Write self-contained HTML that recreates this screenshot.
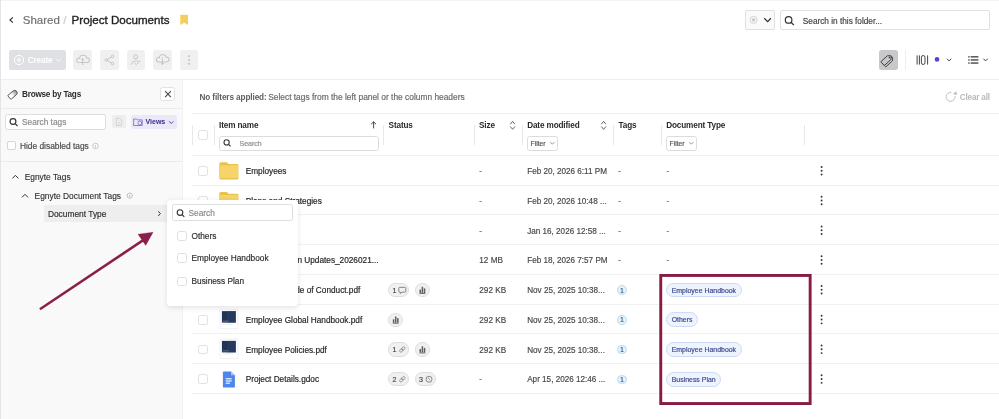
<!DOCTYPE html>
<html><head><meta charset="utf-8">
<style>
*{margin:0;padding:0;box-sizing:border-box}
html,body{width:999px;height:419px;overflow:hidden;background:#fff}
body{font-family:"Liberation Sans",sans-serif;color:#2a2a2a}
#root{position:absolute;left:0;top:0;width:999px;height:419px;will-change:transform}
.a{position:absolute}
.t{position:absolute;white-space:nowrap;line-height:1;-webkit-text-stroke:0.18px currentColor}
svg.s{position:absolute;left:0;top:0;overflow:visible}
</style></head><body><div id="root">
<div class="a" style="left:0.00px;top:0.00px;width:999.00px;height:1.00px;background:#f3f3f4;border-radius:0.00px;"></div>
<div class="a" style="left:0.00px;top:0.00px;width:1.00px;height:419.00px;background:#e4e5e8;border-radius:0.00px;"></div>
<svg class="s" width="999" height="419" viewBox="0 0 999 419"><polyline points="12.9,17.3 10,20 12.9,22.7" fill="none" stroke="#333" stroke-width="1.15"/><path d="M180.3 14.8 h7.7 v10.2 l-3.85 -2.35 l-3.85 2.35 z" fill="#f5cf5e"/></svg>
<div class="t" style="left:22.80px;top:15.00px;font-size:11.50px;color:#6f6f74;">Shared</div>
<div class="t" style="left:63.20px;top:15.00px;font-size:11.50px;color:#c8c8ca;">/</div>
<div class="t" style="left:71.60px;top:14.00px;font-size:11.60px;color:#1e1e1e;-webkit-text-stroke:0.35px #1e1e1e">Project Documents</div>
<div class="a" style="left:745.00px;top:10.00px;width:30.00px;height:20.00px;background:#fafafa;border:1px solid #e1e1e3;border-radius:2.00px;"></div>
<svg class="s" width="999" height="419" viewBox="0 0 999 419"><circle cx="753.6" cy="19.8" r="3.6" fill="none" stroke="#cfcfcf" stroke-width="0.9"/><circle cx="753.6" cy="19.8" r="1.9" fill="#cdcdcd"/><polyline points="764.3,18.3 767.6,21.6 770.9,18.3" fill="none" stroke="#333" stroke-width="1.25"/></svg>
<div class="a" style="left:780.00px;top:10.00px;width:210.00px;height:20.00px;background:#fff;border:1px solid #e1e1e3;border-radius:2.00px;"></div>
<svg class="s" width="999" height="419" viewBox="0 0 999 419"><circle cx="788.6" cy="19.9" r="3.3" fill="none" stroke="#333" stroke-width="1.2"/><line x1="791" y1="22.3" x2="793.9" y2="25.1" stroke="#333" stroke-width="1.3"/></svg>
<div class="t" style="left:802.80px;top:18.00px;font-size:8.25px;color:#454545;">Search in this folder...</div>
<div class="a" style="left:9.30px;top:50.00px;width:56.50px;height:20.00px;background:#dfe0e3;border-radius:2.50px;"></div>
<svg class="s" width="999" height="419" viewBox="0 0 999 419"><circle cx="19" cy="60" r="4.6" fill="none" stroke="#fff" stroke-width="1"/><line x1="19" y1="57.6" x2="19" y2="62.4" stroke="#fff" stroke-width="1.05"/><line x1="16.6" y1="60" x2="21.4" y2="60" stroke="#fff" stroke-width="1.05"/><polyline points="56.2,59.2 58.5,61.4 60.8,59.2" fill="none" stroke="#fff" stroke-width="0.8"/></svg>
<div class="t" style="left:27.70px;top:56.00px;font-size:8.30px;font-weight:bold;-webkit-text-stroke:0;color:#ffffff;letter-spacing:-0.16px">Create</div>
<div class="a" style="left:73.00px;top:50.00px;width:19.00px;height:20.00px;background:#f0f0f0;border-radius:2.50px;"></div>
<div class="a" style="left:100.00px;top:50.00px;width:19.00px;height:20.00px;background:#f0f0f0;border-radius:2.50px;"></div>
<div class="a" style="left:126.60px;top:50.00px;width:18.70px;height:20.00px;background:#f0f0f0;border-radius:2.50px;"></div>
<div class="a" style="left:153.00px;top:50.00px;width:19.00px;height:20.00px;background:#f0f0f0;border-radius:2.50px;"></div>
<div class="a" style="left:179.80px;top:50.00px;width:18.70px;height:20.00px;background:#f0f0f0;border-radius:2.50px;"></div>
<svg class="s" width="999" height="419" viewBox="0 0 999 419"><circle cx="79.00" cy="60.30" r="2.67" fill="#b9b9b9" stroke="#b9b9b9" stroke-width="0.00"/><circle cx="83.10" cy="58.50" r="3.77" fill="#b9b9b9" stroke="#b9b9b9" stroke-width="0.00"/><circle cx="86.90" cy="60.20" r="2.77" fill="#b9b9b9" stroke="#b9b9b9" stroke-width="0.00"/><rect x="79.00" y="59.40" width="7.90" height="3.58" fill="#b9b9b9"/><circle cx="79.00" cy="60.30" r="1.92" fill="#f0f0f0"/><circle cx="83.10" cy="58.50" r="3.02" fill="#f0f0f0"/><circle cx="86.90" cy="60.20" r="2.02" fill="#f0f0f0"/><rect x="79.00" y="59.40" width="7.90" height="2.83" fill="#f0f0f0"/><line x1="82.7" y1="58.4" x2="82.7" y2="65" stroke="#b9b9b9" stroke-width="0.75"/><polyline points="81.2,59.9 82.7,58.4 84.2,59.9" fill="none" stroke="#b9b9b9" stroke-width="0.75"/><circle cx="158.70" cy="59.70" r="2.67" fill="#b9b9b9" stroke="#b9b9b9" stroke-width="0.00"/><circle cx="162.80" cy="57.90" r="3.77" fill="#b9b9b9" stroke="#b9b9b9" stroke-width="0.00"/><circle cx="166.60" cy="59.60" r="2.77" fill="#b9b9b9" stroke="#b9b9b9" stroke-width="0.00"/><rect x="158.70" y="58.80" width="7.90" height="3.58" fill="#b9b9b9"/><circle cx="158.70" cy="59.70" r="1.92" fill="#f0f0f0"/><circle cx="162.80" cy="57.90" r="3.02" fill="#f0f0f0"/><circle cx="166.60" cy="59.60" r="2.02" fill="#f0f0f0"/><rect x="158.70" y="58.80" width="7.90" height="2.83" fill="#f0f0f0"/><line x1="162.4" y1="57.6" x2="162.4" y2="64.6" stroke="#b9b9b9" stroke-width="0.75"/><polyline points="160.9,63.1 162.4,64.6 163.9,63.1" fill="none" stroke="#b9b9b9" stroke-width="0.75"/><circle cx="106.3" cy="59.9" r="1.25" fill="none" stroke="#b9b9b9" stroke-width="0.75"/><circle cx="112.5" cy="56.4" r="1.25" fill="none" stroke="#b9b9b9" stroke-width="0.75"/><circle cx="112.5" cy="63.5" r="1.25" fill="none" stroke="#b9b9b9" stroke-width="0.75"/><line x1="107.4" y1="59.3" x2="111.4" y2="57.0" stroke="#b9b9b9" stroke-width="0.75"/><line x1="107.4" y1="60.5" x2="111.4" y2="62.9" stroke="#b9b9b9" stroke-width="0.75"/><ellipse cx="135.7" cy="56.9" rx="1.9" ry="2.1" fill="none" stroke="#b9b9b9" stroke-width="0.75"/><path d="M131.4 64.6 q0.6 -3.6 4.3 -3.8 q2 0 3 0.9" fill="none" stroke="#b9b9b9" stroke-width="0.75"/><polyline points="134.4,63.0 136.3,64.6 140.6,60.6" fill="none" stroke="#b9b9b9" stroke-width="0.75"/><circle cx="189.1" cy="56.1" r="0.9" fill="#b9b9b9"/><circle cx="189.1" cy="59.9" r="0.9" fill="#b9b9b9"/><circle cx="189.1" cy="63.7" r="0.9" fill="#b9b9b9"/></svg>
<div class="a" style="left:879.00px;top:50.00px;width:19.00px;height:20.00px;background:#c8c8ca;border-radius:2.50px;"></div>
<svg class="s" width="999" height="419" viewBox="0 0 999 419"><g transform="translate(889.0,60.5) rotate(-42)"><path d="M-6.2 -2.6 h8.4 l2.6 2.6 l-2.6 2.6 h-8.4 a0.6 0.6 0 0 1 -0.6 -0.6 v-4 a0.6 0.6 0 0 1 0.6 -0.6 z" fill="#c8c8ca" stroke="#3a3a3a" stroke-width="0.85" stroke-linejoin="round"/></g><g transform="translate(887.6,59.1) rotate(-42)"><path d="M-6.2 -2.6 h8.4 l2.6 2.6 l-2.6 2.6 h-8.4 a0.6 0.6 0 0 1 -0.6 -0.6 v-4 a0.6 0.6 0 0 1 0.6 -0.6 z" fill="#c8c8ca" stroke="#3a3a3a" stroke-width="0.9" stroke-linejoin="round"/><circle cx="2.4" cy="0" r="0.75" fill="#3a3a3a"/></g></svg>
<div class="a" style="left:905.00px;top:50.00px;width:1.00px;height:20.00px;background:#ededed;border-radius:0.00px;"></div>
<svg class="s" width="999" height="419" viewBox="0 0 999 419"><line x1="917.1" y1="55.4" x2="917.1" y2="64.6" stroke="#3a3a3a" stroke-width="0.95"/><line x1="919.4" y1="55.4" x2="919.4" y2="64.6" stroke="#3a3a3a" stroke-width="0.95"/><rect x="921.4" y="55.5" width="3.6" height="9" rx="1.8" fill="none" stroke="#3a3a3a" stroke-width="0.95"/><line x1="927.6" y1="55.4" x2="927.6" y2="64.6" stroke="#3a3a3a" stroke-width="0.95"/><circle cx="937" cy="59.4" r="2.3" fill="#5a3fd0"/><polyline points="946.9,58.7 949.1,60.9 951.3,58.7" fill="none" stroke="#3a3a3a" stroke-width="1"/><rect x="968.2" y="56.2" width="1.4" height="1.3" fill="#3a3a3a"/><rect x="968.2" y="59.3" width="1.4" height="1.3" fill="#3a3a3a"/><rect x="968.2" y="62.4" width="1.4" height="1.3" fill="#3a3a3a"/><rect x="970.6" y="56.2" width="7.8" height="1.3" fill="#3a3a3a"/><rect x="970.6" y="59.3" width="7.8" height="1.3" fill="#3a3a3a"/><rect x="970.6" y="62.4" width="7.8" height="1.3" fill="#3a3a3a"/><polyline points="983.4,58.7 985.6,60.9 987.8,58.7" fill="none" stroke="#3a3a3a" stroke-width="1"/></svg>
<div class="a" style="left:1.00px;top:79.00px;width:998.00px;height:1.00px;background:#efefef;border-radius:0.00px;"></div>
<div class="a" style="left:1.00px;top:80.00px;width:182.00px;height:339.00px;background:#f9f9f9;border-radius:0.00px;box-shadow:inset -1px 0 0 #f2f2f2"></div>
<svg class="s" width="999" height="419" viewBox="0 0 999 419"><defs><linearGradient id="tg" x1="0" x2="1" y1="0" y2="0"><stop offset="0.35" stop-color="#fff"/><stop offset="1" stop-color="#8a8a8a"/></linearGradient></defs><g transform="translate(13.3,94.1) rotate(-40)"><path d="M-4.8 -2.5 h6.6 a2.6 2.6 0 0 1 2.6 2.5 a2.6 2.6 0 0 1 -2.6 2.5 h-6.6 a0.5 0.5 0 0 1 -0.5 -0.5 v-4 a0.5 0.5 0 0 1 0.5 -0.5 z" fill="url(#tg)" stroke="#555" stroke-width="0.9"/></g></svg>
<div class="t" style="left:22.00px;top:91.00px;font-size:8.20px;font-weight:bold;-webkit-text-stroke:0;color:#2b2b2b;letter-spacing:-0.23px">Browse by Tags</div>
<div class="a" style="left:160.40px;top:87.20px;width:14.30px;height:14.30px;background:#fff;border:1px solid #e2e2e2;border-radius:2.50px;"></div>
<svg class="s" width="999" height="419" viewBox="0 0 999 419"><line x1="165.1" y1="91.2" x2="170.9" y2="97.1" stroke="#444" stroke-width="1.05"/><line x1="170.9" y1="91.2" x2="165.1" y2="97.1" stroke="#444" stroke-width="1.05"/></svg>
<div class="a" style="left:1.00px;top:108.00px;width:181.00px;height:1.00px;background:#ebebeb;border-radius:0.00px;"></div>
<div class="a" style="left:5.30px;top:113.80px;width:101.20px;height:16.10px;background:#fff;border:1px solid #dddddd;border-radius:2.50px;"></div>
<svg class="s" width="999" height="419" viewBox="0 0 999 419"><circle cx="13" cy="121.5" r="2.9" fill="none" stroke="#333" stroke-width="1.15"/><line x1="15.1" y1="123.6" x2="17.6" y2="126" stroke="#333" stroke-width="1.2"/></svg>
<div class="t" style="left:22.00px;top:118.00px;font-size:8.30px;color:#8c8c8c;">Search tags</div>
<div class="a" style="left:111.90px;top:114.90px;width:13.70px;height:13.50px;background:#eeeeee;border-radius:2.00px;"></div>
<svg class="s" width="999" height="419" viewBox="0 0 999 419"><path d="M116.3 118.2 h3.3 l2 2 v5.3 h-5.3 z" fill="none" stroke="#c8c8c8" stroke-width="0.7"/><line x1="118.9" y1="121.8" x2="118.9" y2="124.5" stroke="#c8c8c8" stroke-width="0.6"/></svg>
<div class="a" style="left:130.90px;top:114.90px;width:45.80px;height:13.90px;background:#ebe8f8;border-radius:2.50px;"></div>
<svg class="s" width="999" height="419" viewBox="0 0 999 419"><path d="M133.6 119 h3 l0.8 0.9 h4.8 v5.6 h-8.6 z" fill="none" stroke="#6a5fc4" stroke-width="0.75"/><circle cx="139.8" cy="123" r="1.9" fill="none" stroke="#6a5fc4" stroke-width="0.7"/><polyline points="168.9,121.4 171.2,123.4 173.5,121.4" fill="none" stroke="#3a2f8f" stroke-width="0.8"/></svg>
<div class="t" style="left:145.50px;top:118.00px;font-size:7.00px;font-weight:bold;-webkit-text-stroke:0;color:#362c8c;">Views</div>
<div class="a" style="left:6.70px;top:141.10px;width:9.60px;height:9.20px;background:#fff;border:1px solid #d5d5d7;border-radius:2.00px;"></div>
<div class="t" style="left:19.90px;top:142.00px;font-size:8.40px;color:#4a4a4a;">Hide disabled tags</div>
<svg class="s" width="999" height="419" viewBox="0 0 999 419"><circle cx="95.5" cy="146" r="2.8" fill="none" stroke="#aaa" stroke-width="0.6"/><line x1="95.5" y1="145" x2="95.5" y2="147.6" stroke="#aaa" stroke-width="0.6"/></svg>
<div class="a" style="left:1.00px;top:161.30px;width:181.00px;height:1.00px;background:#ebebeb;border-radius:0.00px;"></div>
<svg class="s" width="999" height="419" viewBox="0 0 999 419"><polyline points="12.4,178.4 15.4,175.3 18.4,178.4" fill="none" stroke="#333" stroke-width="1"/><polyline points="22.0,197.4 25.0,194.3 28.0,197.4" fill="none" stroke="#333" stroke-width="1"/><circle cx="129.7" cy="195.6" r="2.6" fill="none" stroke="#999" stroke-width="0.6"/><line x1="129.7" y1="194.7" x2="129.7" y2="197.1" stroke="#999" stroke-width="0.6"/></svg>
<div class="t" style="left:24.70px;top:173.00px;font-size:8.40px;color:#2f2f2f;-webkit-text-stroke:0.12px #2f2f2f">Egnyte Tags</div>
<div class="t" style="left:34.60px;top:192.00px;font-size:8.40px;color:#2f2f2f;-webkit-text-stroke:0.12px #2f2f2f">Egnyte Document Tags</div>
<div class="a" style="left:43.90px;top:205.20px;width:126.10px;height:16.40px;background:#eeeeee;border-radius:2.00px;"></div>
<div class="t" style="left:47.90px;top:210.00px;font-size:8.40px;color:#333333;">Document Type</div>
<svg class="s" width="999" height="419" viewBox="0 0 999 419"><polyline points="158.3,211.3 160.4,213.6 158.3,215.9" fill="none" stroke="#333" stroke-width="1"/></svg>
<div class="t" style="left:199.40px;top:94.00px;font-size:8.20px;font-weight:bold;-webkit-text-stroke:0;color:#5c5f64;letter-spacing:-0.1px">No filters applied:</div>
<div class="t" style="left:268.20px;top:93.00px;font-size:8.40px;color:#6a6a6e;">Select tags from the left panel or the column headers</div>
<svg class="s" width="999" height="419" viewBox="0 0 999 419"><path d="M951.38 92.37 A4.50 4.50 0 1 0 955.00 95.86" fill="none" stroke="#bdbdbd" stroke-width="0.95"/><path d="M956.2 91.2 L952.9 94.0 L957.0 95.0 Z" fill="#bdbdbd"/></svg>
<div class="t" style="left:959.80px;top:94.00px;font-size:8.20px;font-weight:bold;-webkit-text-stroke:0;color:#b9b9b9;letter-spacing:-0.2px">Clear all</div>
<div class="a" style="left:192.00px;top:113.20px;width:807.00px;height:1.00px;background:#eeeeee;border-radius:0.00px;"></div>
<div class="a" style="left:192.00px;top:154.85px;width:807.00px;height:1.00px;background:#f1f1f1;border-radius:0.00px;"></div>
<div class="a" style="left:192.00px;top:184.61px;width:807.00px;height:1.00px;background:#f1f1f1;border-radius:0.00px;"></div>
<div class="a" style="left:192.00px;top:214.37px;width:807.00px;height:1.00px;background:#f1f1f1;border-radius:0.00px;"></div>
<div class="a" style="left:192.00px;top:244.13px;width:807.00px;height:1.00px;background:#f1f1f1;border-radius:0.00px;"></div>
<div class="a" style="left:192.00px;top:273.89px;width:807.00px;height:1.00px;background:#f1f1f1;border-radius:0.00px;"></div>
<div class="a" style="left:192.00px;top:303.65px;width:807.00px;height:1.00px;background:#f1f1f1;border-radius:0.00px;"></div>
<div class="a" style="left:192.00px;top:333.41px;width:807.00px;height:1.00px;background:#f1f1f1;border-radius:0.00px;"></div>
<div class="a" style="left:192.00px;top:363.17px;width:807.00px;height:1.00px;background:#f1f1f1;border-radius:0.00px;"></div>
<div class="a" style="left:192.00px;top:392.93px;width:807.00px;height:1.00px;background:#f1f1f1;border-radius:0.00px;"></div>
<div class="a" style="left:192.20px;top:125.00px;width:1.00px;height:19.50px;background:#e8e8e8;border-radius:0.00px;"></div>
<div class="a" style="left:214.10px;top:125.00px;width:1.00px;height:19.50px;background:#e8e8e8;border-radius:0.00px;"></div>
<div class="a" style="left:383.10px;top:125.00px;width:1.00px;height:19.50px;background:#e8e8e8;border-radius:0.00px;"></div>
<div class="a" style="left:473.90px;top:125.00px;width:1.00px;height:19.50px;background:#e8e8e8;border-radius:0.00px;"></div>
<div class="a" style="left:521.90px;top:125.00px;width:1.00px;height:19.50px;background:#e8e8e8;border-radius:0.00px;"></div>
<div class="a" style="left:613.20px;top:125.00px;width:1.00px;height:19.50px;background:#e8e8e8;border-radius:0.00px;"></div>
<div class="a" style="left:661.20px;top:125.00px;width:1.00px;height:19.50px;background:#e8e8e8;border-radius:0.00px;"></div>
<div class="a" style="left:804.20px;top:125.00px;width:1.00px;height:19.50px;background:#e8e8e8;border-radius:0.00px;"></div>
<div class="a" style="left:198.10px;top:130.30px;width:9.90px;height:9.60px;background:#fff;border:1px solid #e0e0e2;border-radius:2.50px;"></div>
<div class="t" style="left:219.10px;top:122.00px;font-size:8.20px;font-weight:bold;-webkit-text-stroke:0;color:#2b2b2b;letter-spacing:-0.14px">Item name</div>
<div class="t" style="left:388.60px;top:122.00px;font-size:8.20px;font-weight:bold;-webkit-text-stroke:0;color:#2b2b2b;letter-spacing:-0.14px">Status</div>
<div class="t" style="left:479.00px;top:122.00px;font-size:8.20px;font-weight:bold;-webkit-text-stroke:0;color:#2b2b2b;letter-spacing:-0.14px">Size</div>
<div class="t" style="left:527.20px;top:122.00px;font-size:8.20px;font-weight:bold;-webkit-text-stroke:0;color:#2b2b2b;letter-spacing:-0.14px">Date modified</div>
<div class="t" style="left:618.50px;top:122.00px;font-size:8.20px;font-weight:bold;-webkit-text-stroke:0;color:#2b2b2b;letter-spacing:-0.14px">Tags</div>
<div class="t" style="left:666.20px;top:122.00px;font-size:8.20px;font-weight:bold;-webkit-text-stroke:0;color:#2b2b2b;letter-spacing:-0.14px">Document Type</div>
<div class="a" style="left:219.00px;top:136.00px;width:159.60px;height:14.80px;background:#fff;border:1px solid #dcdcdc;border-radius:2.50px;"></div>
<svg class="s" width="999" height="419" viewBox="0 0 999 419"><circle cx="226.6" cy="142.4" r="2.6" fill="none" stroke="#333" stroke-width="1.05"/><line x1="228.5" y1="144.3" x2="230.6" y2="146.4" stroke="#333" stroke-width="1.1"/><line x1="373.6" y1="121.8" x2="373.6" y2="128.4" stroke="#333" stroke-width="0.9"/><polyline points="371.2,124.2 373.6,121.8 376,124.2" fill="none" stroke="#333" stroke-width="0.9"/><polyline points="510.3,124.2 512.6,121.4 514.9,124.2" fill="none" stroke="#555" stroke-width="0.9"/><polyline points="510.3,126.5 512.6,129.3 514.9,126.5" fill="none" stroke="#555" stroke-width="0.9"/><polyline points="601.3,124.2 603.6,121.4 605.9,124.2" fill="none" stroke="#555" stroke-width="0.9"/><polyline points="601.3,126.5 603.6,129.3 605.9,126.5" fill="none" stroke="#555" stroke-width="0.9"/></svg>
<div class="t" style="left:239.50px;top:140.00px;font-size:7.00px;color:#8e8e8e;">Search</div>
<div class="a" style="left:527.20px;top:136.00px;width:31.20px;height:14.80px;background:#fff;border:1px solid #dcdcdc;border-radius:2.50px;"></div>
<div class="t" style="left:530.50px;top:141.00px;font-size:6.80px;color:#555;">Filter</div>
<svg class="s" width="999" height="419" viewBox="0 0 999 419"><polyline points="550.4,142.2 552.4,144.2 554.4,142.2" fill="none" stroke="#666" stroke-width="0.7"/></svg>
<div class="a" style="left:666.20px;top:136.00px;width:31.20px;height:14.80px;background:#fff;border:1px solid #dcdcdc;border-radius:2.50px;"></div>
<div class="t" style="left:669.50px;top:141.00px;font-size:6.80px;color:#555;">Filter</div>
<svg class="s" width="999" height="419" viewBox="0 0 999 419"><polyline points="689.4,142.2 691.4,144.2 693.4,142.2" fill="none" stroke="#666" stroke-width="0.7"/></svg>
<div class="a" style="left:198.20px;top:166.03px;width:10.00px;height:9.80px;background:#fff;border:1px solid #e0e0e2;border-radius:2.50px;"></div>
<svg class="s" width="999" height="419" viewBox="0 0 999 419"><path d="M220.4 162.13 h5.8 a1.2 1.2 0 0 1 0.9 0.4 l1.4 1.5 h8.6 a1.3 1.3 0 0 1 1.3 1.3 v12.6 a1.5 1.5 0 0 1 -1.5 1.5 h-16.1 a1.5 1.5 0 0 1 -1.5 -1.5 v-14.3 a1.5 1.5 0 0 1 1.5 -1.5 z" fill="#e9c24b"/><path d="M219 165.33 h19.1 v11.2 a1.5 1.5 0 0 1 -1.5 1.5 h-16.1 a1.5 1.5 0 0 1 -1.5 -1.5 z" fill="#f6d46a"/></svg>
<div class="t" style="left:245.70px;top:168.00px;font-size:8.25px;color:#262626;">Employees</div>
<div class="t" style="left:479.30px;top:168.00px;font-size:8.20px;color:#777;">-</div>
<div class="t" style="left:527.20px;top:168.00px;font-size:8.15px;color:#4a4a4a;">Feb 20, 2026 6:11 PM</div>
<div class="t" style="left:618.20px;top:168.00px;font-size:8.20px;color:#777;">-</div>
<div class="t" style="left:666.50px;top:168.00px;font-size:8.20px;color:#777;">-</div>
<svg class="s" width="999" height="419" viewBox="0 0 999 419"><circle cx="821.6" cy="166.93" r="0.95" fill="#333"/><circle cx="821.6" cy="170.73" r="0.95" fill="#333"/><circle cx="821.6" cy="174.53" r="0.95" fill="#333"/></svg>
<div class="a" style="left:198.20px;top:195.79px;width:10.00px;height:9.80px;background:#fff;border:1px solid #e0e0e2;border-radius:2.50px;"></div>
<svg class="s" width="999" height="419" viewBox="0 0 999 419"><path d="M220.4 191.89 h5.8 a1.2 1.2 0 0 1 0.9 0.4 l1.4 1.5 h8.6 a1.3 1.3 0 0 1 1.3 1.3 v12.6 a1.5 1.5 0 0 1 -1.5 1.5 h-16.1 a1.5 1.5 0 0 1 -1.5 -1.5 v-14.3 a1.5 1.5 0 0 1 1.5 -1.5 z" fill="#e9c24b"/><path d="M219 195.09 h19.1 v11.2 a1.5 1.5 0 0 1 -1.5 1.5 h-16.1 a1.5 1.5 0 0 1 -1.5 -1.5 z" fill="#f6d46a"/></svg>
<div class="t" style="left:245.70px;top:198.00px;font-size:8.25px;color:#262626;">Plans and Strategies</div>
<div class="t" style="left:479.30px;top:198.00px;font-size:8.20px;color:#777;">-</div>
<div class="t" style="left:527.20px;top:198.00px;font-size:8.15px;color:#4a4a4a;">Feb 20, 2026 10:48 ...</div>
<div class="t" style="left:618.20px;top:198.00px;font-size:8.20px;color:#777;">-</div>
<div class="t" style="left:666.50px;top:198.00px;font-size:8.20px;color:#777;">-</div>
<svg class="s" width="999" height="419" viewBox="0 0 999 419"><circle cx="821.6" cy="196.69" r="0.95" fill="#333"/><circle cx="821.6" cy="200.49" r="0.95" fill="#333"/><circle cx="821.6" cy="204.29" r="0.95" fill="#333"/></svg>
<div class="a" style="left:198.20px;top:225.55px;width:10.00px;height:9.80px;background:#fff;border:1px solid #e0e0e2;border-radius:2.50px;"></div>
<svg class="s" width="999" height="419" viewBox="0 0 999 419"><path d="M220.4 221.65 h5.8 a1.2 1.2 0 0 1 0.9 0.4 l1.4 1.5 h8.6 a1.3 1.3 0 0 1 1.3 1.3 v12.6 a1.5 1.5 0 0 1 -1.5 1.5 h-16.1 a1.5 1.5 0 0 1 -1.5 -1.5 v-14.3 a1.5 1.5 0 0 1 1.5 -1.5 z" fill="#e9c24b"/><path d="M219 224.85 h19.1 v11.2 a1.5 1.5 0 0 1 -1.5 1.5 h-16.1 a1.5 1.5 0 0 1 -1.5 -1.5 z" fill="#f6d46a"/></svg>
<div class="t" style="left:245.70px;top:228.00px;font-size:8.25px;color:#262626;"></div>
<div class="t" style="left:479.30px;top:228.00px;font-size:8.20px;color:#777;">-</div>
<div class="t" style="left:527.20px;top:228.00px;font-size:8.15px;color:#4a4a4a;">Jan 16, 2026 12:58 ...</div>
<div class="t" style="left:618.20px;top:228.00px;font-size:8.20px;color:#777;">-</div>
<div class="t" style="left:666.50px;top:228.00px;font-size:8.20px;color:#777;">-</div>
<svg class="s" width="999" height="419" viewBox="0 0 999 419"><circle cx="821.6" cy="226.45" r="0.95" fill="#333"/><circle cx="821.6" cy="230.25" r="0.95" fill="#333"/><circle cx="821.6" cy="234.05" r="0.95" fill="#333"/></svg>
<div class="a" style="left:198.20px;top:255.31px;width:10.00px;height:9.80px;background:#fff;border:1px solid #e0e0e2;border-radius:2.50px;"></div>
<div class="t" style="right:620.40px;top:257.00px;font-size:8.25px;color:#262626;">Compensation Updates_2026021...</div>
<div class="t" style="left:479.30px;top:257.00px;font-size:8.20px;color:#4a4a4a;">12 MB</div>
<div class="t" style="left:527.20px;top:257.00px;font-size:8.15px;color:#4a4a4a;">Feb 18, 2026 7:57 PM</div>
<div class="t" style="left:618.20px;top:257.00px;font-size:8.20px;color:#777;">-</div>
<div class="t" style="left:666.50px;top:257.00px;font-size:8.20px;color:#777;">-</div>
<svg class="s" width="999" height="419" viewBox="0 0 999 419"><circle cx="821.6" cy="256.21" r="0.95" fill="#333"/><circle cx="821.6" cy="260.01" r="0.95" fill="#333"/><circle cx="821.6" cy="263.81" r="0.95" fill="#333"/></svg>
<div class="a" style="left:198.20px;top:285.07px;width:10.00px;height:9.80px;background:#fff;border:1px solid #e0e0e2;border-radius:2.50px;"></div>
<svg class="s" width="999" height="419" viewBox="0 0 999 419"><rect x="219.9" y="279.57" width="18" height="19.5" rx="1.2" fill="#fff" stroke="#e6e6e6" stroke-width="0.6"/><rect x="221.9" y="281.37" width="13.9" height="11.5" fill="#213456"/><rect x="227" y="281.37" width="8.8" height="11.5" fill="#2a4066" opacity="0.55"/><rect x="222.6" y="290.87" width="6" height="1" fill="#8a96a8" opacity="0.6"/><rect x="223" y="294.07" width="10" height="0.6" fill="#d8dce2"/></svg>
<div class="t" style="left:245.70px;top:287.00px;font-size:8.25px;color:#262626;">Employee Code of Conduct.pdf</div>
<div class="a" style="left:388.10px;top:282.87px;width:21.30px;height:14.20px;background:#f0f0f0;border:1px solid #dddddd;border-radius:7.10px;"></div>
<div class="t" style="left:392.40px;top:288.00px;font-size:7.10px;color:#4a4a4a;">1</div>
<svg class="s" width="999" height="419" viewBox="0 0 999 419"><path d="M399.70 287.37 h5.2 a0.9 0.9 0 0 1 0.9 0.9 v3 a0.9 0.9 0 0 1 -0.9 0.9 h-3 l-1.6 1.4 v-1.4 h-0.6 a0.9 0.9 0 0 1 -0.9 -0.9 v-3 a0.9 0.9 0 0 1 0.9 -0.9 z" fill="none" stroke="#666" stroke-width="0.75"/></svg>
<div class="a" style="left:414.80px;top:282.87px;width:15.20px;height:14.20px;background:#f0f0f0;border:1px solid #dddddd;border-radius:7.10px;"></div>
<svg class="s" width="999" height="419" viewBox="0 0 999 419"><rect x="419.50" y="289.57" width="1.5" height="3.4" fill="#5e5e5e"/><rect x="421.65" y="286.77" width="1.5" height="6.2" fill="#5e5e5e"/><rect x="423.80" y="288.37" width="1.5" height="4.6" fill="#5e5e5e"/><rect x="419.50" y="292.97" width="5.8" height="0.9" fill="#5e5e5e"/></svg>
<div class="t" style="left:479.30px;top:287.00px;font-size:8.20px;color:#4a4a4a;">292 KB</div>
<div class="t" style="left:527.20px;top:287.00px;font-size:8.15px;color:#4a4a4a;">Nov 25, 2025 10:38...</div>
<div class="a" style="left:617.30px;top:285.37px;width:9.60px;height:9.60px;background:#e4f2fc;border:1px solid #b6daf3;border-radius:4.80px;"></div>
<div class="t" style="left:620.20px;top:288.00px;font-size:6.30px;color:#3c5a78;">1</div>
<div class="t" style="left:666.1px;top:282.67px;height:14.6px;padding:0 4.6px;font-size:6.94px;line-height:13.4px;color:#3b4a8f;background:#eef3fd;border:1px solid #cbdaf5;border-radius:8px">Employee Handbook</div>
<svg class="s" width="999" height="419" viewBox="0 0 999 419"><circle cx="821.6" cy="285.97" r="0.95" fill="#333"/><circle cx="821.6" cy="289.77" r="0.95" fill="#333"/><circle cx="821.6" cy="293.57" r="0.95" fill="#333"/></svg>
<div class="a" style="left:198.20px;top:314.83px;width:10.00px;height:9.80px;background:#fff;border:1px solid #e0e0e2;border-radius:2.50px;"></div>
<svg class="s" width="999" height="419" viewBox="0 0 999 419"><rect x="219.9" y="309.33" width="18" height="19.5" rx="1.2" fill="#fff" stroke="#e6e6e6" stroke-width="0.6"/><rect x="221.9" y="311.13" width="13.9" height="11.5" fill="#213456"/><rect x="227" y="311.13" width="8.8" height="11.5" fill="#2a4066" opacity="0.55"/><rect x="222.6" y="320.63" width="6" height="1" fill="#8a96a8" opacity="0.6"/><rect x="223" y="323.83" width="10" height="0.6" fill="#d8dce2"/></svg>
<div class="t" style="left:245.70px;top:317.00px;font-size:8.25px;color:#262626;">Employee Global Handbook.pdf</div>
<div class="a" style="left:388.10px;top:312.63px;width:15.20px;height:14.20px;background:#f0f0f0;border:1px solid #dddddd;border-radius:7.10px;"></div>
<svg class="s" width="999" height="419" viewBox="0 0 999 419"><rect x="392.80" y="319.33" width="1.5" height="3.4" fill="#5e5e5e"/><rect x="394.95" y="316.53" width="1.5" height="6.2" fill="#5e5e5e"/><rect x="397.10" y="318.13" width="1.5" height="4.6" fill="#5e5e5e"/><rect x="392.80" y="322.73" width="5.8" height="0.9" fill="#5e5e5e"/></svg>
<div class="t" style="left:479.30px;top:317.00px;font-size:8.20px;color:#4a4a4a;">292 KB</div>
<div class="t" style="left:527.20px;top:317.00px;font-size:8.15px;color:#4a4a4a;">Nov 25, 2025 10:38...</div>
<div class="a" style="left:617.30px;top:315.13px;width:9.60px;height:9.60px;background:#e4f2fc;border:1px solid #b6daf3;border-radius:4.80px;"></div>
<div class="t" style="left:620.20px;top:317.00px;font-size:6.30px;color:#3c5a78;">1</div>
<div class="t" style="left:666.1px;top:312.43px;height:14.6px;padding:0 4.6px;font-size:6.94px;line-height:13.4px;color:#3b4a8f;background:#eef3fd;border:1px solid #cbdaf5;border-radius:8px">Others</div>
<svg class="s" width="999" height="419" viewBox="0 0 999 419"><circle cx="821.6" cy="315.73" r="0.95" fill="#333"/><circle cx="821.6" cy="319.53" r="0.95" fill="#333"/><circle cx="821.6" cy="323.33" r="0.95" fill="#333"/></svg>
<div class="a" style="left:198.20px;top:344.59px;width:10.00px;height:9.80px;background:#fff;border:1px solid #e0e0e2;border-radius:2.50px;"></div>
<svg class="s" width="999" height="419" viewBox="0 0 999 419"><rect x="219.9" y="339.09" width="18" height="19.5" rx="1.2" fill="#fff" stroke="#e6e6e6" stroke-width="0.6"/><rect x="221.9" y="340.89" width="13.9" height="11.5" fill="#213456"/><rect x="227" y="340.89" width="8.8" height="11.5" fill="#2a4066" opacity="0.55"/><rect x="222.6" y="350.39" width="6" height="1" fill="#8a96a8" opacity="0.6"/><rect x="223" y="353.59" width="10" height="0.6" fill="#d8dce2"/></svg>
<div class="t" style="left:245.70px;top:347.00px;font-size:8.25px;color:#262626;">Employee Policies.pdf</div>
<div class="a" style="left:388.10px;top:342.39px;width:21.30px;height:14.20px;background:#f0f0f0;border:1px solid #dddddd;border-radius:7.10px;"></div>
<div class="t" style="left:392.40px;top:347.00px;font-size:7.10px;color:#4a4a4a;">1</div>
<svg class="s" width="999" height="419" viewBox="0 0 999 419"><g transform="translate(402.30,349.49) rotate(-45)"><rect x="-3.3" y="-1.3" width="3.8" height="2.6" rx="1.3" fill="none" stroke="#777" stroke-width="0.65"/><rect x="-0.5" y="-1.3" width="3.8" height="2.6" rx="1.3" fill="none" stroke="#777" stroke-width="0.65"/></g></svg>
<div class="a" style="left:414.80px;top:342.39px;width:15.20px;height:14.20px;background:#f0f0f0;border:1px solid #dddddd;border-radius:7.10px;"></div>
<svg class="s" width="999" height="419" viewBox="0 0 999 419"><rect x="419.50" y="349.09" width="1.5" height="3.4" fill="#5e5e5e"/><rect x="421.65" y="346.29" width="1.5" height="6.2" fill="#5e5e5e"/><rect x="423.80" y="347.89" width="1.5" height="4.6" fill="#5e5e5e"/><rect x="419.50" y="352.49" width="5.8" height="0.9" fill="#5e5e5e"/></svg>
<div class="t" style="left:479.30px;top:347.00px;font-size:8.20px;color:#4a4a4a;">292 KB</div>
<div class="t" style="left:527.20px;top:347.00px;font-size:8.15px;color:#4a4a4a;">Nov 25, 2025 10:38...</div>
<div class="a" style="left:617.30px;top:344.89px;width:9.60px;height:9.60px;background:#e4f2fc;border:1px solid #b6daf3;border-radius:4.80px;"></div>
<div class="t" style="left:620.20px;top:347.00px;font-size:6.30px;color:#3c5a78;">1</div>
<div class="t" style="left:666.1px;top:342.19px;height:14.6px;padding:0 4.6px;font-size:6.94px;line-height:13.4px;color:#3b4a8f;background:#eef3fd;border:1px solid #cbdaf5;border-radius:8px">Employee Handbook</div>
<svg class="s" width="999" height="419" viewBox="0 0 999 419"><circle cx="821.6" cy="345.49" r="0.95" fill="#333"/><circle cx="821.6" cy="349.29" r="0.95" fill="#333"/><circle cx="821.6" cy="353.09" r="0.95" fill="#333"/></svg>
<div class="a" style="left:198.20px;top:374.35px;width:10.00px;height:9.80px;background:#fff;border:1px solid #e0e0e2;border-radius:2.50px;"></div>
<svg class="s" width="999" height="419" viewBox="0 0 999 419"><path d="M223.8 371.45 h7.2 l3.9 3.9 v11.3 a0.9 0.9 0 0 1 -0.9 0.9 h-10.2 a0.9 0.9 0 0 1 -0.9 -0.9 v-14.3 a0.9 0.9 0 0 1 0.9 -0.9 z" fill="#4f86ec"/><path d="M231 371.45 v3.9 h3.9 z" fill="#a8c5f7"/><rect x="225.7" y="378.25" width="6" height="1.1" fill="#fff"/><rect x="225.7" y="380.45" width="6" height="1.1" fill="#fff"/><rect x="225.7" y="382.65" width="4.2" height="1.1" fill="#fff"/></svg>
<div class="t" style="left:245.70px;top:376.00px;font-size:8.25px;color:#262626;">Project Details.gdoc</div>
<div class="a" style="left:388.10px;top:372.15px;width:21.30px;height:14.20px;background:#f0f0f0;border:1px solid #dddddd;border-radius:7.10px;"></div>
<div class="t" style="left:392.40px;top:377.00px;font-size:7.10px;color:#4a4a4a;">2</div>
<svg class="s" width="999" height="419" viewBox="0 0 999 419"><g transform="translate(402.30,379.25) rotate(-45)"><rect x="-3.3" y="-1.3" width="3.8" height="2.6" rx="1.3" fill="none" stroke="#777" stroke-width="0.65"/><rect x="-0.5" y="-1.3" width="3.8" height="2.6" rx="1.3" fill="none" stroke="#777" stroke-width="0.65"/></g></svg>
<div class="a" style="left:414.80px;top:372.15px;width:21.30px;height:14.20px;background:#f0f0f0;border:1px solid #dddddd;border-radius:7.10px;"></div>
<div class="t" style="left:419.10px;top:377.00px;font-size:7.10px;color:#4a4a4a;">3</div>
<svg class="s" width="999" height="419" viewBox="0 0 999 419"><circle cx="429.00" cy="379.25" r="3.0" fill="none" stroke="#666" stroke-width="0.75"/><polyline points="428.40,377.65 429.00,379.25 430.10,380.15" fill="none" stroke="#666" stroke-width="0.6"/></svg>
<div class="t" style="left:479.30px;top:376.00px;font-size:8.20px;color:#777;">-</div>
<div class="t" style="left:527.20px;top:376.00px;font-size:8.15px;color:#4a4a4a;">Apr 15, 2026 12:46 ...</div>
<div class="a" style="left:617.30px;top:374.65px;width:9.60px;height:9.60px;background:#e4f2fc;border:1px solid #b6daf3;border-radius:4.80px;"></div>
<div class="t" style="left:620.20px;top:377.00px;font-size:6.30px;color:#3c5a78;">1</div>
<div class="t" style="left:666.1px;top:371.95px;height:14.6px;padding:0 4.6px;font-size:6.94px;line-height:13.4px;color:#3b4a8f;background:#eef3fd;border:1px solid #cbdaf5;border-radius:8px">Business Plan</div>
<svg class="s" width="999" height="419" viewBox="0 0 999 419"><circle cx="821.6" cy="375.25" r="0.95" fill="#333"/><circle cx="821.6" cy="379.05" r="0.95" fill="#333"/><circle cx="821.6" cy="382.85" r="0.95" fill="#333"/></svg>
<div class="a" style="left:167.40px;top:199.70px;width:130.40px;height:105.90px;background:#fff;border-radius:3.00px;box-shadow:0 1.5px 5px rgba(40,40,90,0.12),0 0 1px rgba(0,0,0,0.07)"></div>
<div class="a" style="left:172.30px;top:204.20px;width:121.20px;height:17.20px;background:#fff;border:1px solid #dedede;border-radius:2.50px;"></div>
<svg class="s" width="999" height="419" viewBox="0 0 999 419"><circle cx="180" cy="212.6" r="2.8" fill="none" stroke="#333" stroke-width="1.1"/><line x1="182.1" y1="214.7" x2="184.3" y2="216.9" stroke="#333" stroke-width="1.15"/></svg>
<div class="t" style="left:188.50px;top:209.00px;font-size:8.30px;color:#8c8c8c;">Search</div>
<div class="a" style="left:177.00px;top:231.00px;width:10.00px;height:9.80px;background:#fff;border:1px solid #e0e0e2;border-radius:2.50px;"></div>
<div class="t" style="left:191.50px;top:232.00px;font-size:8.30px;color:#2f2f2f;">Others</div>
<div class="a" style="left:177.00px;top:253.40px;width:10.00px;height:9.80px;background:#fff;border:1px solid #e0e0e2;border-radius:2.50px;"></div>
<div class="t" style="left:191.50px;top:254.00px;font-size:8.30px;color:#2f2f2f;">Employee Handbook</div>
<div class="a" style="left:177.00px;top:276.50px;width:10.00px;height:9.80px;background:#fff;border:1px solid #e0e0e2;border-radius:2.50px;"></div>
<div class="t" style="left:191.50px;top:277.00px;font-size:8.30px;color:#2f2f2f;">Business Plan</div>
<svg class="s" width="999" height="419" viewBox="0 0 999 419"><line x1="39.9" y1="309.3" x2="144" y2="239.6" stroke="#8a1f4c" stroke-width="2.5"/><path d="M153.1 232.2 L138.0 234.2 L145.7 245.4 Z" fill="#8a1f4c" stroke="#8a1f4c" stroke-width="0.3" stroke-linejoin="round"/></svg>
<svg class="s" width="999" height="419" viewBox="0 0 999 419"><rect x="660.75" y="275.45" width="149.4" height="128.1" fill="none" stroke="#881a44" stroke-width="2.9"/></svg>
</div></body></html>
